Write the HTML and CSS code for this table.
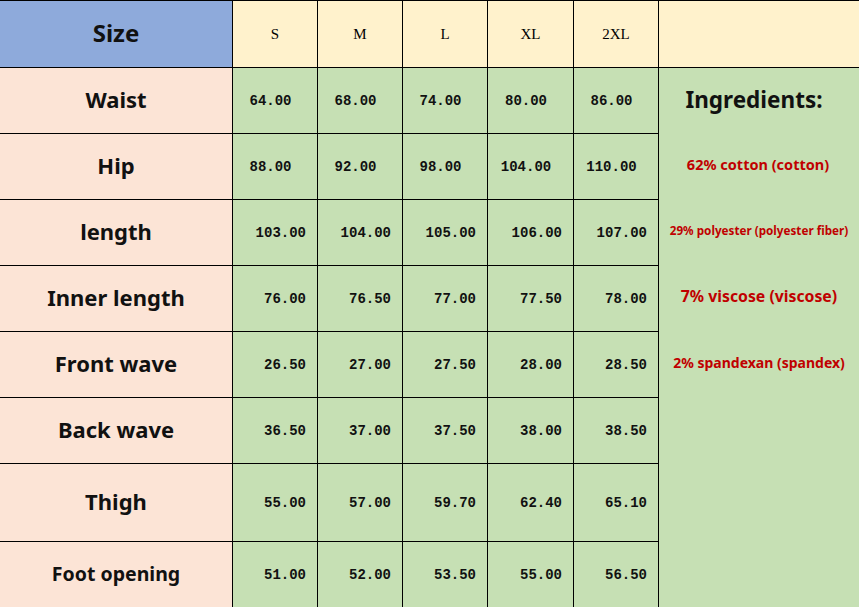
FILE: index.html
```html
<!DOCTYPE html>
<html>
<head>
<meta charset="utf-8">
<link rel="stylesheet" href="styles.css">
</head>
<body>
<div class="sheet">
  <div class="cell label head">Size</div>
  <div class="cell size">S</div>
  <div class="cell size">M</div>
  <div class="cell size">L</div>
  <div class="cell size">XL</div>
  <div class="cell size">2XL</div>
  <div class="cell size"></div>

  <div class="cell label">Waist</div>
  <div class="cell num mid">64.00</div>
  <div class="cell num mid">68.00</div>
  <div class="cell num mid">74.00</div>
  <div class="cell num mid">80.00</div>
  <div class="cell num mid">86.00</div>
  <div class="cell ingredients">
    <div class="ing title">Ingredients:</div>
    <div class="ing red r1">62% cotton (cotton)</div>
    <div class="ing red r2">29% polyester (polyester fiber)</div>
    <div class="ing red r3">7% viscose (viscose)</div>
    <div class="ing red r4">2% spandexan (spandex)</div>
  </div>

  <div class="cell label">Hip</div>
  <div class="cell num mid">88.00</div>
  <div class="cell num mid">92.00</div>
  <div class="cell num mid">98.00</div>
  <div class="cell num mid">104.00</div>
  <div class="cell num mid">110.00</div>

  <div class="cell label">length</div>
  <div class="cell num">103.00</div>
  <div class="cell num">104.00</div>
  <div class="cell num">105.00</div>
  <div class="cell num">106.00</div>
  <div class="cell num">107.00</div>

  <div class="cell label">Inner length</div>
  <div class="cell num">76.00</div>
  <div class="cell num">76.50</div>
  <div class="cell num">77.00</div>
  <div class="cell num">77.50</div>
  <div class="cell num">78.00</div>

  <div class="cell label">Front wave</div>
  <div class="cell num">26.50</div>
  <div class="cell num">27.00</div>
  <div class="cell num">27.50</div>
  <div class="cell num">28.00</div>
  <div class="cell num">28.50</div>

  <div class="cell label">Back wave</div>
  <div class="cell num">36.50</div>
  <div class="cell num">37.00</div>
  <div class="cell num">37.50</div>
  <div class="cell num">38.00</div>
  <div class="cell num">38.50</div>

  <div class="cell label">Thigh</div>
  <div class="cell num">55.00</div>
  <div class="cell num">57.00</div>
  <div class="cell num">59.70</div>
  <div class="cell num">62.40</div>
  <div class="cell num">65.10</div>

  <div class="cell label small">Foot opening</div>
  <div class="cell num">51.00</div>
  <div class="cell num">52.00</div>
  <div class="cell num">53.50</div>
  <div class="cell num">55.00</div>
  <div class="cell num">56.50</div>
</div>
</body>
</html>
```

FILE: styles.css
```css
html, body {
  margin: 0;
  padding: 0;
  background: #c6e0b4;
  overflow: hidden;
}

.sheet {
  width: 859px;
  height: 607px;
  display: grid;
  grid-template-columns: 232px 84px 84px 84px 85px 84px 1fr;
  grid-template-rows: 66px 65px 65px 65px 65px 65px 65px 77px 1fr;
  gap: 1px;
  padding-top: 1px;
  box-sizing: border-box;
  background: #000;
}

.cell {
  display: flex;
  align-items: center;
  justify-content: center;
}

.label {
  background: #fce4d6;
  font-family: "Noto Sans", "Open Sans", sans-serif;
  font-weight: 700;
  font-size: 22px;
  color: #111;
  padding-bottom: 3px;
}

.label.head {
  background: #8eaadb;
  font-size: 24px;
}

.label.small {
  font-size: 19.5px;
}

.size {
  background: #fff2cc;
  font-family: "Liberation Serif", serif;
  font-size: 15px;
  color: #000;
}

.num {
  background: #c6e0b4;
  font-family: "Liberation Mono", monospace;
  font-weight: 700;
  font-size: 14px;
  color: #111;
  justify-content: flex-end;
  padding-right: 11px;
}

.num.mid {
  justify-content: center;
  padding-right: 9px;
}

.ingredients {
  grid-column: 7;
  grid-row: 2 / 10;
  background: #c6e0b4;
  flex-direction: column;
  justify-content: flex-start;
  align-items: stretch;
}

.ing {
  height: 66px;
  flex: none;
  display: flex;
  align-items: center;
  justify-content: center;
  font-family: "Noto Sans", "Open Sans", sans-serif;
  font-weight: 700;
}

.ing.title {
  height: 63px;
  font-size: 22.5px;
  color: #111;
  padding-right: 10px;
}

.red {
  color: #c00000;
}

.r1 { font-size: 14.5px; padding-right: 2px; }
.r2 { font-size: 11.7px; }
.r3 { font-size: 15.8px; }
.r4 { font-size: 14px; }
```
